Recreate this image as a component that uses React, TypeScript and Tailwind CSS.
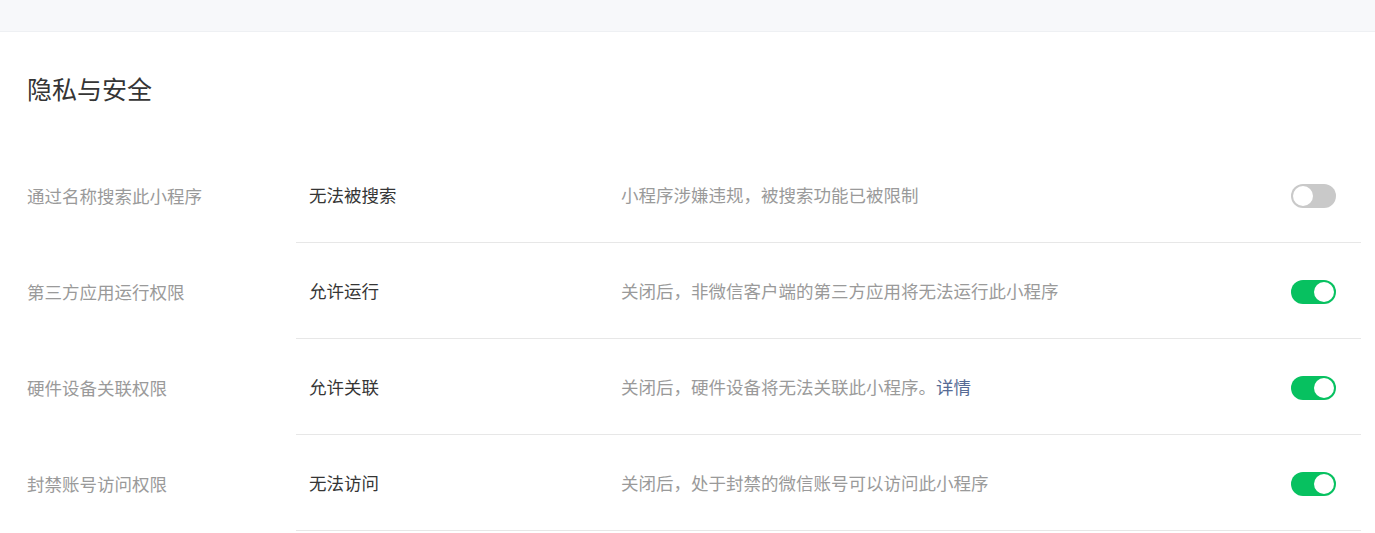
import React, { useState } from 'react';

interface SettingRow {
  label: string;
  value: string;
  desc: string;
  link?: string;
  on: boolean;
}

const rows: SettingRow[] = [
  { label: '通过名称搜索此小程序', value: '无法被搜索', desc: '小程序涉嫌违规，被搜索功能已被限制', on: false },
  { label: '第三方应用运行权限', value: '允许运行', desc: '关闭后，非微信客户端的第三方应用将无法运行此小程序', on: true },
  { label: '硬件设备关联权限', value: '允许关联', desc: '关闭后，硬件设备将无法关联此小程序。', link: '详情', on: true },
  { label: '封禁账号访问权限', value: '无法访问', desc: '关闭后，处于封禁的微信账号可以访问此小程序', on: true },
];

const Toggle: React.FC<{ on: boolean; onClick: () => void }> = ({ on, onClick }) => (
  <button
    onClick={onClick}
    className={`flex h-[24px] w-[45px] items-center rounded-full px-[2px] ${
      on ? 'justify-end bg-[#07c160]' : 'justify-start bg-[#c9c9c9]'
    }`}
  >
    <span className="h-[20px] w-[20px] rounded-full bg-white" />
  </button>
);

export default function App() {
  const [state, setState] = useState(rows.map((r) => r.on));

  return (
    <div
      className="h-[533px] w-full bg-white"
      style={{ fontFamily: '"Noto Sans CJK SC", "Noto Sans", sans-serif' }}
    >
      <div className="h-[32px] border-b border-[#eef0f3] bg-[#f7f8fa]" />

      <div className="pl-[27px] pr-[14px]">
        <h2 className="pt-[43px] text-[25px] leading-[26px] font-normal text-[#353535]">隐私与安全</h2>

        <div className="mt-[46px] flex flex-col">
          {rows.map((row, i) => (
            <div key={row.label} className="flex h-[96px]">
              <div className="flex w-[269px] items-center pt-[2px] text-[17.5px] text-[#9a9a9a]">{row.label}</div>
              <div className="flex flex-1 items-center border-b border-[#e7e7e7] pt-[2px] pr-[25px]">
                <div className="w-[325px] pl-[13px] text-[17.5px] text-[#353535]">{row.value}</div>
                <div className="flex-1 text-[17.5px] text-[#9a9a9a]">
                  {row.desc}
                  {row.link && <a className="cursor-pointer text-[#576b95]">{row.link}</a>}
                </div>
                <Toggle
                  on={state[i]}
                  onClick={() => setState((s) => s.map((v, j) => (j === i ? !v : v)))}
                />
              </div>
            </div>
          ))}
        </div>
      </div>
    </div>
  );
}
